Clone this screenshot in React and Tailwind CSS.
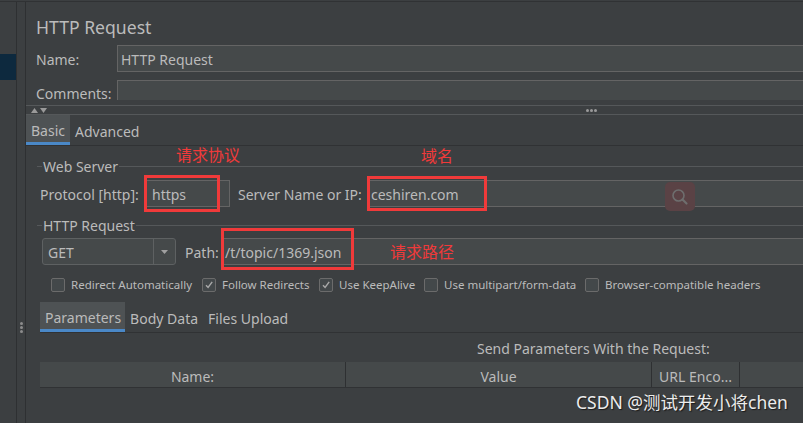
import React from 'react';

function SectionTitle({ children }) {
  return (
    <div className="flex h-[16px] items-center">
      <div className="h-px w-[5px] bg-[#55585a]" />
      <span className="px-[1px] pt-[1px] text-[14px] leading-[16px]">{children}</span>
      <div className="h-px flex-1 bg-[#55585a]" />
    </div>
  );
}

function CheckItem({ checked, label, className }) {
  return (
    <div className={`flex items-center ${className}`}>
      <div className="flex h-[14px] w-[14px] shrink-0 items-center justify-center rounded-[2px] border border-[#6b6b6b] bg-[#43484a]">
        {checked && (
          <svg width="10" height="10" viewBox="0 0 10 10" fill="none">
            <path d="M2 5.2 L4.1 7.5 L8.2 1.8" stroke="#a9a9a9" strokeWidth="1.4" />
          </svg>
        )}
      </div>
      <span className="ml-[6px] whitespace-nowrap text-[11.5px] leading-[14px]">{label}</span>
    </div>
  );
}

export default function App() {
  return (
    <div className="relative flex h-[423px] w-[803px] flex-col overflow-hidden bg-[#3c3f41] font-['Noto_Sans','Noto_Sans_CJK_SC',sans-serif] text-[#bbbbbb]">
      <div className="h-[1px] shrink-0" />
      <div className="h-[1px] shrink-0 bg-[#303234]" />

      <div className="flex min-h-0 flex-1">
        {/* tree sidebar */}
        <div className="w-[17px] shrink-0 border-r border-[#2e3032] pt-[52px]">
          <div className="h-[26px] w-[16px] bg-[#0d293e]" />
        </div>

        {/* splitter */}
        <div className="flex w-[9px] shrink-0 flex-col items-center gap-[1px] border-r border-[#2e3032] pt-[320px]">
          <div className="h-[3px] w-[3px] rounded-full bg-[#8c8c8c]" />
          <div className="h-[3px] w-[3px] rounded-full bg-[#8c8c8c]" />
          <div className="h-[3px] w-[3px] rounded-full bg-[#8c8c8c]" />
        </div>

        {/* main */}
        <div className="flex min-w-0 flex-1 flex-col">
          <div className="h-[98px] shrink-0 pl-[10px]">
            <div className="mt-[12px] h-[24px] pt-[1px] text-[17.6px] leading-[24px]">HTTP Request</div>
            <div className="mt-[7px] flex h-[27px] text-[14px]">
              <div className="flex w-[81px] items-center pt-[2px]">Name:</div>
              <div className="flex flex-1 items-center border border-r-0 border-[#646464] bg-[#45494a] pl-[3px] pt-[2px]">
                HTTP Request
              </div>
            </div>
            <div className="mt-[8px] flex h-[20px]">
              <div className="flex w-[81px] items-end text-[14px] leading-[12px]">Comments:</div>
              <div className="flex-1 border border-b-0 border-r-0 border-[#646464] bg-[#45494a]" />
            </div>
          </div>

          {/* collapse bar */}
          <div className="mt-[5px] flex h-[10px] shrink-0 items-center border-y border-[#55585a]">
            <div className="ml-[5px] flex w-[18px] items-center gap-[2px]">
              <svg width="7" height="5" viewBox="0 0 7 5"><path d="M0 5 L3.5 0 L7 5 Z" fill="#9a9a9a" /></svg>
              <svg width="7" height="5" viewBox="0 0 7 5"><path d="M0 0 L3.5 5 L7 0 Z" fill="#9a9a9a" /></svg>
            </div>
            <div className="ml-[537px] flex gap-[1px]">
              <div className="h-[3px] w-[3px] rounded-full bg-[#9a9a9a]" />
              <div className="h-[3px] w-[3px] rounded-full bg-[#9a9a9a]" />
              <div className="h-[3px] w-[3px] rounded-full bg-[#9a9a9a]" />
            </div>
          </div>

          {/* Basic / Advanced */}
          <div className="flex h-[31px] shrink-0 border-b border-[#303234] text-[14px]">
            <div className="flex h-[30px] items-center border-b-[3px] border-[#4a88c7] bg-[#4e5254] px-[5px] pt-[3px]">Basic</div>
            <div className="flex h-[30px] items-center px-[5px] pt-[3px]">Advanced</div>
          </div>

          <div className="pl-[11px]">
            <div className="mt-[12px]">
              <SectionTitle>Web Server</SectionTitle>
            </div>
            <div className="mt-[6px] flex h-[27px] pl-[3px] text-[14px]">
              <div className="flex w-[106px] items-center whitespace-nowrap pt-[2px]">Protocol [http]:</div>
              <div className="flex w-[84px] items-center border border-[#646464] bg-[#45494a] pl-[5px] pt-[2px]">https</div>
              <div className="flex w-[137px] items-center whitespace-nowrap pl-[8px] pt-[2px]">Server Name or IP:</div>
              <div className="flex flex-1 items-center border border-r-0 border-[#646464] bg-[#45494a] pl-[3px] pt-[2px]">ceshiren.com</div>
            </div>

            <div className="mt-[10px]">
              <SectionTitle>HTTP Request</SectionTitle>
            </div>
            <div className="mt-[5px] flex h-[27px] pl-[5px] text-[14px]">
              <div className="flex w-[134px] rounded-[3px] border border-[#5e6162] bg-[#45494a]">
                <div className="flex flex-1 items-center pl-[5px] pt-[2px]">GET</div>
                <div className="flex w-[22px] items-center justify-center border-l border-[#5e6162]">
                  <svg width="7" height="4" viewBox="0 0 7 4"><path d="M0 0 L3.5 4 L7 0 Z" fill="#a0a0a0" /></svg>
                </div>
              </div>
              <div className="flex w-[46px] items-center pl-[9px] pt-[2px]">Path:</div>
              <div className="flex flex-1 items-center border border-r-0 border-[#646464] bg-[#45494a] pl-[2px] pt-[2px]">/t/topic/1369.json</div>
            </div>

            <div className="mt-[13px] flex h-[14px] pl-[14px]">
              <CheckItem className="w-[151px]" label="Redirect Automatically" />
              <CheckItem className="w-[117px]" checked label="Follow Redirects" />
              <CheckItem className="w-[105px]" checked label="Use KeepAlive" />
              <CheckItem className="w-[161px]" label="Use multipart/form-data" />
              <CheckItem label="Browser-compatible headers" />
            </div>

            {/* Parameters / Body Data / Files Upload */}
            <div className="ml-[3px] mt-[10px] flex h-[31px] border-b border-[#303234] text-[14px]">
              <div className="flex h-[30px] items-center border-b-[3px] border-[#4a88c7] bg-[#4e5254] pl-[5px] pr-[4px] pt-[3px]">Parameters</div>
              <div className="flex h-[30px] items-center px-[5px] pt-[3px]">Body Data</div>
              <div className="flex h-[30px] items-center px-[5px] pt-[3px]">Files Upload</div>
            </div>

            <div className="ml-[3px] flex h-[29px] items-center whitespace-nowrap pl-[437px] pt-[1px] text-[14px]">
              Send Parameters With the Request:
            </div>

            <div className="ml-[3px] flex h-[26px] border-b border-[#303234] bg-[#45494a] text-[14px]">
              <div className="flex w-[306px] items-center justify-center border-r border-[#2e3032] pt-[3px]">Name:</div>
              <div className="flex w-[306px] items-center justify-center border-r border-[#2e3032] pt-[3px]">Value</div>
              <div className="flex w-[88px] items-center justify-center whitespace-nowrap border-r border-[#2e3032] pt-[3px]">URL Enco...</div>
              <div className="flex-1" />
            </div>
          </div>
        </div>
      </div>

      {/* faint search overlay */}
      <div className="absolute left-[665px] top-[182px] flex h-[29px] w-[30px] items-center justify-center rounded-[5px] bg-[#5a4245]">
        <svg width="20" height="20" viewBox="0 0 20 20" fill="none">
          <circle cx="8.5" cy="8.5" r="5.5" stroke="#6e6e6e" strokeWidth="1.6" />
          <path d="M12.5 12.5 L16.5 16.5" stroke="#6e6e6e" strokeWidth="2.2" strokeLinecap="round" />
        </svg>
      </div>

      {/* annotations */}
      <div className="absolute left-[144px] top-[175px] h-[37px] w-[76px] border-[3px] border-[#f03a3a]" />
      <div className="absolute left-[367px] top-[176px] h-[35px] w-[120px] border-[3px] border-[#f03a3a]" />
      <div className="absolute left-[221px] top-[228px] h-[42px] w-[133px] border-[3px] border-[#f03a3a]" />
      <div className="absolute left-[176px] top-[144px] text-[16px] leading-[22px] text-[#f03a3a]">请求协议</div>
      <div className="absolute left-[421px] top-[145px] text-[16px] leading-[22px] text-[#f03a3a]">域名</div>
      <div className="absolute left-[390px] top-[241px] text-[16px] leading-[22px] text-[#f03a3a]">请求路径</div>

      <div className="absolute left-[576px] top-[391px] whitespace-nowrap text-[17.5px] leading-[22px] text-[#ececec] [text-shadow:1px_1px_1px_#1a1a1a]">
        CSDN @测试开发小将chen
      </div>
    </div>
  );
}
